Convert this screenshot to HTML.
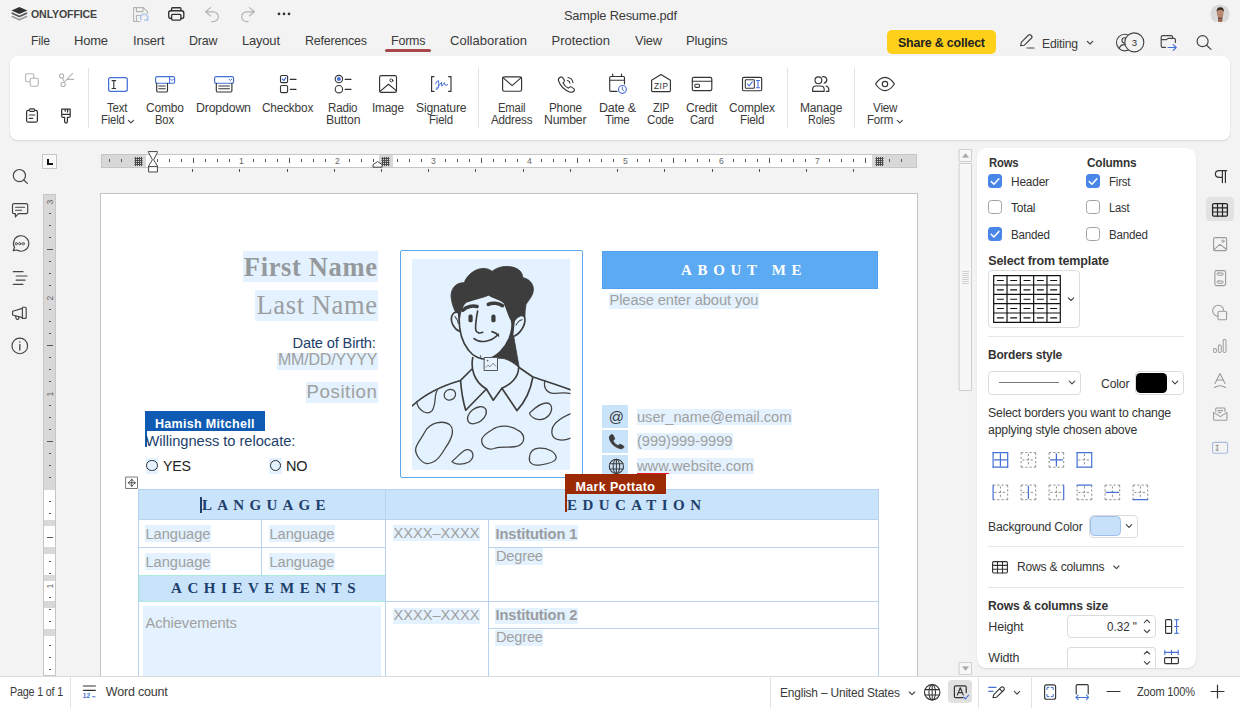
<!DOCTYPE html>
<html><head><meta charset="utf-8"><title>Sample Resume.pdf</title>
<style>
html,body{margin:0;padding:0}
body{width:1240px;height:708px;position:relative;overflow:hidden;background:#f3f3f3;font-family:"Liberation Sans",sans-serif}
.t{position:absolute;white-space:nowrap;line-height:20px;height:20px}
.b{position:absolute;box-sizing:border-box}
</style></head><body>
<span class="t" style="left:31.00px;top:3.93px;font-size:10.60px;color:#444;font-weight:700;letter-spacing:-0.126px;font-family:'Liberation Sans',sans-serif;">ONLYOFFICE</span>
<span class="t" style="left:564.00px;top:5.50px;font-size:13.00px;color:#3a3a3a;letter-spacing:-0.200px;transform:scaleX(0.9863);transform-origin:0 0;font-family:'Liberation Sans',sans-serif;">Sample Resume.pdf</span>
<span class="t" style="left:30.50px;top:30.50px;font-size:13.00px;color:#3a3a3a;letter-spacing:-0.200px;transform:scaleX(0.9338);transform-origin:0 0;font-family:'Liberation Sans',sans-serif;">File</span>
<span class="t" style="left:74.00px;top:30.50px;font-size:13.00px;color:#3a3a3a;letter-spacing:-0.200px;transform:scaleX(0.9978);transform-origin:0 0;font-family:'Liberation Sans',sans-serif;">Home</span>
<span class="t" style="left:132.50px;top:30.50px;font-size:13.00px;color:#3a3a3a;letter-spacing:-0.200px;transform:scaleX(0.9997);transform-origin:0 0;font-family:'Liberation Sans',sans-serif;">Insert</span>
<span class="t" style="left:189.00px;top:30.50px;font-size:13.00px;color:#3a3a3a;letter-spacing:-0.200px;transform:scaleX(0.9585);transform-origin:0 0;font-family:'Liberation Sans',sans-serif;">Draw</span>
<span class="t" style="left:242.00px;top:30.50px;font-size:13.00px;color:#3a3a3a;letter-spacing:-0.200px;transform:scaleX(0.9993);transform-origin:0 0;font-family:'Liberation Sans',sans-serif;">Layout</span>
<span class="t" style="left:304.50px;top:30.50px;font-size:13.00px;color:#3a3a3a;letter-spacing:-0.200px;transform:scaleX(0.9586);transform-origin:0 0;font-family:'Liberation Sans',sans-serif;">References</span>
<span class="t" style="left:391.00px;top:30.50px;font-size:13.00px;color:#3a3a3a;letter-spacing:-0.200px;transform:scaleX(0.9576);transform-origin:0 0;font-family:'Liberation Sans',sans-serif;">Forms</span>
<span class="t" style="left:450.00px;top:30.50px;font-size:13.00px;color:#3a3a3a;letter-spacing:0.033px;font-family:'Liberation Sans',sans-serif;">Collaboration</span>
<span class="t" style="left:551.50px;top:30.50px;font-size:13.00px;color:#3a3a3a;letter-spacing:-0.003px;font-family:'Liberation Sans',sans-serif;">Protection</span>
<span class="t" style="left:634.50px;top:30.50px;font-size:13.00px;color:#3a3a3a;letter-spacing:-0.200px;transform:scaleX(0.9875);transform-origin:0 0;font-family:'Liberation Sans',sans-serif;">View</span>
<span class="t" style="left:686.00px;top:30.50px;font-size:13.00px;color:#3a3a3a;letter-spacing:-0.189px;font-family:'Liberation Sans',sans-serif;">Plugins</span>
<div class="b" style="left:385.00px;top:49.00px;width:46.00px;height:3.00px;background:#a9484c;border-radius:1.5px"></div>
<div class="b" style="left:887.00px;top:30.00px;width:109.00px;height:23.50px;background:#ffd019;border-radius:5px"></div>
<span class="t" style="left:898.00px;top:32.50px;font-size:13.00px;color:#222;font-weight:700;letter-spacing:-0.200px;transform:scaleX(0.9548);transform-origin:0 0;font-family:'Liberation Sans',sans-serif;">Share &amp; collect</span>
<span class="t" style="left:1042.00px;top:33.50px;font-size:13.00px;color:#3a3a3a;letter-spacing:-0.200px;transform:scaleX(0.9339);transform-origin:0 0;font-family:'Liberation Sans',sans-serif;">Editing</span>
<div class="b" style="left:10.00px;top:56.00px;width:1220.00px;height:83.50px;background:#fff;border-radius:8px;box-shadow:0 1px 2px rgba(0,0,0,.12)"></div>
<div class="b" style="left:87.50px;top:68.00px;width:1.00px;height:59.50px;background:#e4e4e4"></div>
<div class="b" style="left:478.00px;top:68.00px;width:1.00px;height:59.50px;background:#e4e4e4"></div>
<div class="b" style="left:787.00px;top:68.00px;width:1.00px;height:59.50px;background:#e4e4e4"></div>
<div class="b" style="left:854.00px;top:68.00px;width:1.00px;height:59.50px;background:#e4e4e4"></div>
<span class="t" style="left:107.00px;top:98.17px;font-size:12.50px;color:#3a3a3a;letter-spacing:-0.200px;transform:scaleX(0.9183);transform-origin:0 0;font-family:'Liberation Sans',sans-serif;">Text</span>
<span class="t" style="left:100.50px;top:109.87px;font-size:12.50px;color:#3a3a3a;letter-spacing:-0.200px;transform:scaleX(0.9052);transform-origin:0 0;font-family:'Liberation Sans',sans-serif;">Field</span>
<span class="t" style="left:145.50px;top:98.17px;font-size:12.50px;color:#3a3a3a;letter-spacing:-0.200px;transform:scaleX(0.9622);transform-origin:0 0;font-family:'Liberation Sans',sans-serif;">Combo</span>
<span class="t" style="left:155.00px;top:109.87px;font-size:12.50px;color:#3a3a3a;letter-spacing:-0.200px;transform:scaleX(0.8988);transform-origin:0 0;font-family:'Liberation Sans',sans-serif;">Box</span>
<span class="t" style="left:195.50px;top:98.17px;font-size:12.50px;color:#3a3a3a;letter-spacing:-0.200px;transform:scaleX(0.9897);transform-origin:0 0;font-family:'Liberation Sans',sans-serif;">Dropdown</span>
<span class="t" style="left:262.40px;top:98.17px;font-size:12.50px;color:#3a3a3a;letter-spacing:-0.200px;transform:scaleX(0.9468);transform-origin:0 0;font-family:'Liberation Sans',sans-serif;">Checkbox</span>
<span class="t" style="left:328.00px;top:98.17px;font-size:12.50px;color:#3a3a3a;letter-spacing:-0.200px;transform:scaleX(0.9260);transform-origin:0 0;font-family:'Liberation Sans',sans-serif;">Radio</span>
<span class="t" style="left:325.50px;top:109.87px;font-size:12.50px;color:#3a3a3a;letter-spacing:-0.200px;transform:scaleX(0.9819);transform-origin:0 0;font-family:'Liberation Sans',sans-serif;">Button</span>
<span class="t" style="left:372.00px;top:98.17px;font-size:12.50px;color:#3a3a3a;letter-spacing:-0.200px;transform:scaleX(0.9429);transform-origin:0 0;font-family:'Liberation Sans',sans-serif;">Image</span>
<span class="t" style="left:415.50px;top:98.17px;font-size:12.50px;color:#3a3a3a;letter-spacing:-0.200px;transform:scaleX(0.9729);transform-origin:0 0;font-family:'Liberation Sans',sans-serif;">Signature</span>
<span class="t" style="left:428.50px;top:109.87px;font-size:12.50px;color:#3a3a3a;letter-spacing:-0.200px;transform:scaleX(0.9128);transform-origin:0 0;font-family:'Liberation Sans',sans-serif;">Field</span>
<span class="t" style="left:497.50px;top:98.17px;font-size:12.50px;color:#3a3a3a;letter-spacing:-0.200px;transform:scaleX(0.9029);transform-origin:0 0;font-family:'Liberation Sans',sans-serif;">Email</span>
<span class="t" style="left:490.50px;top:109.87px;font-size:12.50px;color:#3a3a3a;letter-spacing:-0.200px;transform:scaleX(0.9294);transform-origin:0 0;font-family:'Liberation Sans',sans-serif;">Address</span>
<span class="t" style="left:549.00px;top:98.17px;font-size:12.50px;color:#3a3a3a;letter-spacing:-0.200px;transform:scaleX(0.9337);transform-origin:0 0;font-family:'Liberation Sans',sans-serif;">Phone</span>
<span class="t" style="left:544.00px;top:109.87px;font-size:12.50px;color:#3a3a3a;letter-spacing:-0.200px;transform:scaleX(0.9780);transform-origin:0 0;font-family:'Liberation Sans',sans-serif;">Number</span>
<span class="t" style="left:598.60px;top:98.17px;font-size:12.50px;color:#3a3a3a;letter-spacing:-0.200px;transform:scaleX(0.9997);transform-origin:0 0;font-family:'Liberation Sans',sans-serif;">Date &amp;</span>
<span class="t" style="left:604.80px;top:109.87px;font-size:12.50px;color:#3a3a3a;letter-spacing:-0.200px;transform:scaleX(0.9284);transform-origin:0 0;font-family:'Liberation Sans',sans-serif;">Time</span>
<span class="t" style="left:652.50px;top:98.17px;font-size:12.50px;color:#3a3a3a;letter-spacing:-0.200px;transform:scaleX(0.8664);transform-origin:0 0;font-family:'Liberation Sans',sans-serif;">ZIP</span>
<span class="t" style="left:647.00px;top:109.87px;font-size:12.50px;color:#3a3a3a;letter-spacing:-0.200px;transform:scaleX(0.9221);transform-origin:0 0;font-family:'Liberation Sans',sans-serif;">Code</span>
<span class="t" style="left:686.00px;top:98.17px;font-size:12.50px;color:#3a3a3a;letter-spacing:-0.200px;transform:scaleX(0.9740);transform-origin:0 0;font-family:'Liberation Sans',sans-serif;">Credit</span>
<span class="t" style="left:689.50px;top:109.87px;font-size:12.50px;color:#3a3a3a;letter-spacing:-0.200px;transform:scaleX(0.9059);transform-origin:0 0;font-family:'Liberation Sans',sans-serif;">Card</span>
<span class="t" style="left:729.00px;top:98.17px;font-size:12.50px;color:#3a3a3a;letter-spacing:-0.200px;transform:scaleX(0.9559);transform-origin:0 0;font-family:'Liberation Sans',sans-serif;">Complex</span>
<span class="t" style="left:739.50px;top:109.87px;font-size:12.50px;color:#3a3a3a;letter-spacing:-0.200px;transform:scaleX(0.9318);transform-origin:0 0;font-family:'Liberation Sans',sans-serif;">Field</span>
<span class="t" style="left:799.50px;top:98.17px;font-size:12.50px;color:#3a3a3a;letter-spacing:-0.200px;transform:scaleX(0.9622);transform-origin:0 0;font-family:'Liberation Sans',sans-serif;">Manage</span>
<span class="t" style="left:807.50px;top:109.87px;font-size:12.50px;color:#3a3a3a;letter-spacing:-0.200px;transform:scaleX(0.8666);transform-origin:0 0;font-family:'Liberation Sans',sans-serif;">Roles</span>
<span class="t" style="left:872.50px;top:98.17px;font-size:12.50px;color:#3a3a3a;letter-spacing:-0.200px;transform:scaleX(0.9327);transform-origin:0 0;font-family:'Liberation Sans',sans-serif;">View</span>
<span class="t" style="left:867.00px;top:109.87px;font-size:12.50px;color:#3a3a3a;letter-spacing:-0.200px;transform:scaleX(0.9209);transform-origin:0 0;font-family:'Liberation Sans',sans-serif;">Form</span>
<div class="b" style="left:100.00px;top:193.00px;width:818.00px;height:484.00px;background:#fff;border:1px solid #c4c4c4"></div>
<div class="b" style="left:976.50px;top:148.00px;width:219.50px;height:520.00px;background:#fff;border-radius:9px;box-shadow:0 1px 2px rgba(0,0,0,.10)"></div>
<div class="b" style="left:243.00px;top:251.00px;width:135.00px;height:30.50px;background:#e3f2fe"></div>
<span class="t" style="left:243.80px;top:256.56px;font-size:26.50px;color:#96999c;font-weight:700;letter-spacing:0.656px;font-family:'Liberation Serif',serif;">First Name</span>
<div class="b" style="left:255.00px;top:290.00px;width:123.00px;height:30.50px;background:#e3f2fe"></div>
<span class="t" style="left:256.50px;top:294.56px;font-size:26.50px;color:#9b9ea1;letter-spacing:0.622px;font-family:'Liberation Serif',serif;">Last Name</span>
<span class="t" style="left:292.50px;top:332.92px;font-size:14.67px;color:#1d3f6b;letter-spacing:-0.162px;font-family:'Liberation Sans',sans-serif;">Date of Birth:</span>
<div class="b" style="left:277.00px;top:352.50px;width:101.00px;height:17.50px;background:#e3f2fe"></div>
<span class="t" style="left:277.50px;top:349.96px;font-size:16.00px;color:#a0a0a0;letter-spacing:-0.200px;transform:scaleX(0.9995);transform-origin:0 0;font-family:'Liberation Sans',sans-serif;">MM/DD/YYYY</span>
<div class="b" style="left:306.00px;top:382.00px;width:72.00px;height:20.50px;background:#e3f2fe"></div>
<span class="t" style="left:306.50px;top:382.03px;font-size:18.67px;color:#a0a0a0;letter-spacing:0.583px;font-family:'Liberation Sans',sans-serif;">Position</span>
<div class="b" style="left:145.00px;top:411.00px;width:120.00px;height:19.50px;background:#0f5bb3"></div>
<div class="b" style="left:145.00px;top:411.00px;width:1.60px;height:36.00px;background:#0f5bb3"></div>
<span class="t" style="left:155.00px;top:413.67px;font-size:12.50px;color:#fff;font-weight:700;letter-spacing:0.310px;font-family:'Liberation Sans',sans-serif;">Hamish Mitchell</span>
<span class="t" style="left:145.50px;top:430.92px;font-size:14.67px;color:#1d3f6b;letter-spacing:-0.036px;font-family:'Liberation Sans',sans-serif;">Willingness to relocate:</span>
<div class="b" style="left:146.00px;top:458.00px;width:12.00px;height:16.00px;background:#e3f2fe"></div>
<div class="b" style="left:146.00px;top:459.70px;width:11.60px;height:11.60px;border:1.5px solid #2e2e2e;border-radius:50%"></div>
<span class="t" style="left:162.50px;top:455.92px;font-size:14.67px;color:#222;letter-spacing:-0.200px;transform:scaleX(0.9670);transform-origin:0 0;font-family:'Liberation Sans',sans-serif;">YES</span>
<div class="b" style="left:269.00px;top:458.00px;width:13.00px;height:16.00px;background:#e3f2fe"></div>
<div class="b" style="left:269.70px;top:459.70px;width:11.60px;height:11.60px;border:1.5px solid #2e2e2e;border-radius:50%"></div>
<span class="t" style="left:285.50px;top:455.92px;font-size:14.67px;color:#222;letter-spacing:-0.200px;transform:scaleX(0.9860);transform-origin:0 0;font-family:'Liberation Sans',sans-serif;">NO</span>
<div class="b" style="left:399.50px;top:250.00px;width:183.50px;height:227.50px;border:1px solid #5fa8ec;border-radius:2px;background:#fff"></div>
<div class="b" style="left:412.00px;top:259.00px;width:158.20px;height:211.30px;background:#e3f2fe"></div>
<div class="b" style="left:602.00px;top:251.00px;width:276.00px;height:37.50px;background:#5caaf2;border:1px solid #4fa1ef"></div>
<span class="t" style="left:681.00px;top:259.94px;font-size:15.00px;color:#fff;font-weight:700;letter-spacing:5.645px;font-family:'Liberation Serif',serif;white-space:pre;">ABOUT ME</span>
<div class="b" style="left:609.00px;top:293.00px;width:150.00px;height:16.00px;background:#e3f2fe"></div>
<span class="t" style="left:609.50px;top:290.42px;font-size:14.67px;color:#a0a0a0;letter-spacing:-0.089px;font-family:'Liberation Sans',sans-serif;">Please enter about you</span>
<div class="b" style="left:602.00px;top:405.00px;width:26.00px;height:22.50px;background:#c9e3fb"></div>
<div class="b" style="left:602.00px;top:430.00px;width:26.00px;height:22.50px;background:#c9e3fb"></div>
<div class="b" style="left:602.00px;top:455.00px;width:26.00px;height:22.00px;background:#c9e3fb"></div>
<div class="b" style="left:636.50px;top:409.00px;width:155.50px;height:16.00px;background:#e3f2fe"></div>
<span class="t" style="left:637.00px;top:406.92px;font-size:14.67px;color:#a0a0a0;letter-spacing:-0.035px;font-family:'Liberation Sans',sans-serif;">user_name@email.com</span>
<div class="b" style="left:636.50px;top:433.00px;width:96.50px;height:16.50px;background:#e3f2fe"></div>
<span class="t" style="left:637.00px;top:430.92px;font-size:14.67px;color:#a0a0a0;letter-spacing:-0.061px;font-family:'Liberation Sans',sans-serif;">(999)999-9999</span>
<div class="b" style="left:636.50px;top:458.00px;width:117.50px;height:16.00px;background:#e3f2fe"></div>
<span class="t" style="left:637.00px;top:455.92px;font-size:14.67px;color:#a0a0a0;letter-spacing:-0.005px;font-family:'Liberation Sans',sans-serif;">www.website.com</span>
<div class="b" style="left:636.50px;top:473.00px;width:32.50px;height:1.30px;background:#e0141c"></div>
<div class="b" style="left:138.50px;top:489.00px;width:740.50px;height:30.50px;background:#c9e3fb"></div>
<div class="b" style="left:138.50px;top:574.50px;width:247.00px;height:27.00px;background:#c9e3fb;border:1px solid #a8ecd9;border-right:none"></div>
<div class="b" style="left:138.00px;top:489.00px;width:1.00px;height:187.00px;background:#b9d2f0"></div>
<div class="b" style="left:385.00px;top:489.00px;width:1.00px;height:187.00px;background:#b9d2f0"></div>
<div class="b" style="left:878.00px;top:489.00px;width:1.00px;height:187.00px;background:#b9d2f0"></div>
<div class="b" style="left:261.00px;top:519.50px;width:1.00px;height:55.00px;background:#b9d2f0"></div>
<div class="b" style="left:488.00px;top:519.50px;width:1.00px;height:156.50px;background:#b9d2f0"></div>
<div class="b" style="left:138.50px;top:519.00px;width:740.50px;height:1.00px;background:#b9d2f0"></div>
<div class="b" style="left:138.50px;top:547.00px;width:247.00px;height:1.00px;background:#b9d2f0"></div>
<div class="b" style="left:488.50px;top:546.50px;width:390.50px;height:1.00px;background:#b9d2f0"></div>
<div class="b" style="left:385.50px;top:601.00px;width:493.50px;height:1.00px;background:#b9d2f0"></div>
<div class="b" style="left:488.50px;top:628.00px;width:390.50px;height:1.00px;background:#b9d2f0"></div>
<div class="b" style="left:138.50px;top:488.50px;width:740.50px;height:1.00px;background:#b9d2f0"></div>
<span class="t" style="left:202.00px;top:494.94px;font-size:15.00px;color:#1d3f6b;font-weight:700;letter-spacing:5.260px;font-family:'Liberation Serif',serif;">LANGUAGE</span>
<div class="b" style="left:200.00px;top:496.50px;width:1.60px;height:16.50px;background:#1d3f6b"></div>
<span class="t" style="left:567.00px;top:494.94px;font-size:15.00px;color:#1d3f6b;font-weight:700;letter-spacing:5.429px;font-family:'Liberation Serif',serif;">EDUCATION</span>
<span class="t" style="left:171.00px;top:577.94px;font-size:15.00px;color:#1d3f6b;font-weight:700;letter-spacing:5.558px;font-family:'Liberation Serif',serif;">ACHIEVEMENTS</span>
<div class="b" style="left:145.00px;top:525.00px;width:66.00px;height:16.50px;background:#e3f2fe"></div>
<span class="t" style="left:145.50px;top:523.92px;font-size:14.67px;color:#a0a0a0;letter-spacing:-0.038px;font-family:'Liberation Sans',sans-serif;">Language</span>
<div class="b" style="left:269.00px;top:525.00px;width:66.00px;height:16.50px;background:#e3f2fe"></div>
<span class="t" style="left:269.50px;top:523.92px;font-size:14.67px;color:#a0a0a0;letter-spacing:-0.038px;font-family:'Liberation Sans',sans-serif;">Language</span>
<div class="b" style="left:145.00px;top:553.00px;width:66.00px;height:16.50px;background:#e3f2fe"></div>
<span class="t" style="left:145.50px;top:551.92px;font-size:14.67px;color:#a0a0a0;letter-spacing:-0.038px;font-family:'Liberation Sans',sans-serif;">Language</span>
<div class="b" style="left:269.00px;top:553.00px;width:66.00px;height:16.50px;background:#e3f2fe"></div>
<span class="t" style="left:269.50px;top:551.92px;font-size:14.67px;color:#a0a0a0;letter-spacing:-0.038px;font-family:'Liberation Sans',sans-serif;">Language</span>
<div class="b" style="left:142.50px;top:606.00px;width:238.50px;height:70.00px;background:#e3f2fe"></div>
<span class="t" style="left:145.50px;top:612.92px;font-size:14.67px;color:#a0a0a0;letter-spacing:-0.058px;font-family:'Liberation Sans',sans-serif;">Achievements</span>
<div class="b" style="left:393.00px;top:525.00px;width:87.00px;height:16.00px;background:#e3f2fe"></div>
<span class="t" style="left:393.50px;top:523.42px;font-size:14.67px;color:#a0a0a0;letter-spacing:-0.055px;font-family:'Liberation Sans',sans-serif;">XXXX–XXXX</span>
<div class="b" style="left:393.00px;top:607.50px;width:87.00px;height:16.00px;background:#e3f2fe"></div>
<span class="t" style="left:393.50px;top:604.92px;font-size:14.67px;color:#a0a0a0;letter-spacing:-0.055px;font-family:'Liberation Sans',sans-serif;">XXXX–XXXX</span>
<div class="b" style="left:495.00px;top:525.00px;width:83.00px;height:16.00px;background:#e3f2fe"></div>
<span class="t" style="left:495.50px;top:523.92px;font-size:14.67px;color:#9a9c9e;font-weight:700;letter-spacing:-0.093px;font-family:'Liberation Sans',sans-serif;">Institution 1</span>
<div class="b" style="left:495.00px;top:607.50px;width:83.00px;height:16.50px;background:#e3f2fe"></div>
<span class="t" style="left:495.50px;top:605.42px;font-size:14.67px;color:#9a9c9e;font-weight:700;letter-spacing:-0.093px;font-family:'Liberation Sans',sans-serif;">Institution 2</span>
<div class="b" style="left:495.00px;top:548.00px;width:48.00px;height:16.50px;background:#e3f2fe"></div>
<span class="t" style="left:495.50px;top:546.42px;font-size:14.67px;color:#a0a0a0;letter-spacing:-0.200px;transform:scaleX(0.9976);transform-origin:0 0;font-family:'Liberation Sans',sans-serif;">Degree</span>
<div class="b" style="left:495.00px;top:629.50px;width:48.00px;height:16.00px;background:#e3f2fe"></div>
<span class="t" style="left:495.50px;top:627.42px;font-size:14.67px;color:#a0a0a0;letter-spacing:-0.200px;transform:scaleX(0.9976);transform-origin:0 0;font-family:'Liberation Sans',sans-serif;">Degree</span>
<div class="b" style="left:565.00px;top:474.00px;width:101.00px;height:20.00px;background:#9b2a03"></div>
<div class="b" style="left:565.00px;top:474.00px;width:1.60px;height:38.00px;background:#9b2a03"></div>
<span class="t" style="left:575.50px;top:476.67px;font-size:12.50px;color:#fff;font-weight:700;letter-spacing:0.346px;font-family:'Liberation Sans',sans-serif;">Mark Pottato</span>
<div class="b" style="left:42.00px;top:154.00px;width:15.00px;height:15.00px;background:#f9f9f9;border:1px solid #c6c6c6"></div>
<div class="b" style="left:47.00px;top:158.50px;width:2.00px;height:6.50px;background:#111"></div>
<div class="b" style="left:47.00px;top:163.00px;width:6.00px;height:2.00px;background:#111"></div>
<div class="b" style="left:101.00px;top:154.00px;width:816.00px;height:14.00px;background:#fff;border:1px solid #c6c6c6"></div>
<div class="b" style="left:102.00px;top:155.00px;width:44.00px;height:12.00px;background:#d8d8d8"></div>
<div class="b" style="left:379.00px;top:155.00px;width:13.50px;height:12.00px;background:#d8d8d8"></div>
<div class="b" style="left:871.50px;top:155.00px;width:44.50px;height:12.00px;background:#d8d8d8"></div>
<div class="b" style="left:109.00px;top:159.00px;width:1.00px;height:3.00px;background:#555"></div>
<div class="b" style="left:121.00px;top:159.00px;width:1.00px;height:3.00px;background:#555"></div>
<div class="b" style="left:157.00px;top:159.00px;width:1.00px;height:3.00px;background:#555"></div>
<div class="b" style="left:169.00px;top:159.00px;width:1.00px;height:3.00px;background:#555"></div>
<div class="b" style="left:181.00px;top:159.00px;width:1.00px;height:3.00px;background:#555"></div>
<div class="b" style="left:193.00px;top:157.50px;width:1.00px;height:5.70px;background:#555"></div>
<div class="b" style="left:205.00px;top:159.00px;width:1.00px;height:3.00px;background:#555"></div>
<div class="b" style="left:217.00px;top:159.00px;width:1.00px;height:3.00px;background:#555"></div>
<div class="b" style="left:229.00px;top:159.00px;width:1.00px;height:3.00px;background:#555"></div>
<span class="t" style="left:239.10px;top:150.92px;font-size:8.60px;color:#666;font-family:'Liberation Sans',sans-serif;">1</span>
<div class="b" style="left:253.00px;top:159.00px;width:1.00px;height:3.00px;background:#555"></div>
<div class="b" style="left:265.00px;top:159.00px;width:1.00px;height:3.00px;background:#555"></div>
<div class="b" style="left:277.00px;top:159.00px;width:1.00px;height:3.00px;background:#555"></div>
<div class="b" style="left:289.00px;top:157.50px;width:1.00px;height:5.70px;background:#555"></div>
<div class="b" style="left:301.00px;top:159.00px;width:1.00px;height:3.00px;background:#555"></div>
<div class="b" style="left:313.00px;top:159.00px;width:1.00px;height:3.00px;background:#555"></div>
<div class="b" style="left:325.00px;top:159.00px;width:1.00px;height:3.00px;background:#555"></div>
<span class="t" style="left:335.10px;top:150.92px;font-size:8.60px;color:#666;font-family:'Liberation Sans',sans-serif;">2</span>
<div class="b" style="left:349.00px;top:159.00px;width:1.00px;height:3.00px;background:#555"></div>
<div class="b" style="left:361.00px;top:159.00px;width:1.00px;height:3.00px;background:#555"></div>
<div class="b" style="left:373.00px;top:159.00px;width:1.00px;height:3.00px;background:#555"></div>
<div class="b" style="left:397.00px;top:159.00px;width:1.00px;height:3.00px;background:#555"></div>
<div class="b" style="left:409.00px;top:159.00px;width:1.00px;height:3.00px;background:#555"></div>
<div class="b" style="left:421.00px;top:159.00px;width:1.00px;height:3.00px;background:#555"></div>
<span class="t" style="left:431.10px;top:150.92px;font-size:8.60px;color:#666;font-family:'Liberation Sans',sans-serif;">3</span>
<div class="b" style="left:445.00px;top:159.00px;width:1.00px;height:3.00px;background:#555"></div>
<div class="b" style="left:457.00px;top:159.00px;width:1.00px;height:3.00px;background:#555"></div>
<div class="b" style="left:469.00px;top:159.00px;width:1.00px;height:3.00px;background:#555"></div>
<div class="b" style="left:481.00px;top:157.50px;width:1.00px;height:5.70px;background:#555"></div>
<div class="b" style="left:493.00px;top:159.00px;width:1.00px;height:3.00px;background:#555"></div>
<div class="b" style="left:505.00px;top:159.00px;width:1.00px;height:3.00px;background:#555"></div>
<div class="b" style="left:517.00px;top:159.00px;width:1.00px;height:3.00px;background:#555"></div>
<span class="t" style="left:527.10px;top:150.92px;font-size:8.60px;color:#666;font-family:'Liberation Sans',sans-serif;">4</span>
<div class="b" style="left:541.00px;top:159.00px;width:1.00px;height:3.00px;background:#555"></div>
<div class="b" style="left:553.00px;top:159.00px;width:1.00px;height:3.00px;background:#555"></div>
<div class="b" style="left:565.00px;top:159.00px;width:1.00px;height:3.00px;background:#555"></div>
<div class="b" style="left:577.00px;top:157.50px;width:1.00px;height:5.70px;background:#555"></div>
<div class="b" style="left:589.00px;top:159.00px;width:1.00px;height:3.00px;background:#555"></div>
<div class="b" style="left:601.00px;top:159.00px;width:1.00px;height:3.00px;background:#555"></div>
<div class="b" style="left:613.00px;top:159.00px;width:1.00px;height:3.00px;background:#555"></div>
<span class="t" style="left:623.10px;top:150.92px;font-size:8.60px;color:#666;font-family:'Liberation Sans',sans-serif;">5</span>
<div class="b" style="left:637.00px;top:159.00px;width:1.00px;height:3.00px;background:#555"></div>
<div class="b" style="left:649.00px;top:159.00px;width:1.00px;height:3.00px;background:#555"></div>
<div class="b" style="left:661.00px;top:159.00px;width:1.00px;height:3.00px;background:#555"></div>
<div class="b" style="left:673.00px;top:157.50px;width:1.00px;height:5.70px;background:#555"></div>
<div class="b" style="left:685.00px;top:159.00px;width:1.00px;height:3.00px;background:#555"></div>
<div class="b" style="left:697.00px;top:159.00px;width:1.00px;height:3.00px;background:#555"></div>
<div class="b" style="left:709.00px;top:159.00px;width:1.00px;height:3.00px;background:#555"></div>
<span class="t" style="left:719.10px;top:150.92px;font-size:8.60px;color:#666;font-family:'Liberation Sans',sans-serif;">6</span>
<div class="b" style="left:733.00px;top:159.00px;width:1.00px;height:3.00px;background:#555"></div>
<div class="b" style="left:745.00px;top:159.00px;width:1.00px;height:3.00px;background:#555"></div>
<div class="b" style="left:757.00px;top:159.00px;width:1.00px;height:3.00px;background:#555"></div>
<div class="b" style="left:769.00px;top:157.50px;width:1.00px;height:5.70px;background:#555"></div>
<div class="b" style="left:781.00px;top:159.00px;width:1.00px;height:3.00px;background:#555"></div>
<div class="b" style="left:793.00px;top:159.00px;width:1.00px;height:3.00px;background:#555"></div>
<div class="b" style="left:805.00px;top:159.00px;width:1.00px;height:3.00px;background:#555"></div>
<span class="t" style="left:815.10px;top:150.92px;font-size:8.60px;color:#666;font-family:'Liberation Sans',sans-serif;">7</span>
<div class="b" style="left:829.00px;top:159.00px;width:1.00px;height:3.00px;background:#555"></div>
<div class="b" style="left:841.00px;top:159.00px;width:1.00px;height:3.00px;background:#555"></div>
<div class="b" style="left:853.00px;top:159.00px;width:1.00px;height:3.00px;background:#555"></div>
<div class="b" style="left:865.00px;top:157.50px;width:1.00px;height:5.70px;background:#555"></div>
<div class="b" style="left:889.00px;top:159.00px;width:1.00px;height:3.00px;background:#555"></div>
<div class="b" style="left:901.00px;top:159.00px;width:1.00px;height:3.00px;background:#555"></div>
<div class="b" style="left:192.04px;top:169.00px;width:1.00px;height:3.00px;background:#555"></div>
<div class="b" style="left:239.28px;top:169.00px;width:1.00px;height:3.00px;background:#555"></div>
<div class="b" style="left:286.52px;top:169.00px;width:1.00px;height:3.00px;background:#555"></div>
<div class="b" style="left:333.76px;top:169.00px;width:1.00px;height:3.00px;background:#555"></div>
<div class="b" style="left:381.00px;top:169.00px;width:1.00px;height:3.00px;background:#555"></div>
<div class="b" style="left:428.24px;top:169.00px;width:1.00px;height:3.00px;background:#555"></div>
<div class="b" style="left:475.48px;top:169.00px;width:1.00px;height:3.00px;background:#555"></div>
<div class="b" style="left:522.72px;top:169.00px;width:1.00px;height:3.00px;background:#555"></div>
<div class="b" style="left:569.96px;top:169.00px;width:1.00px;height:3.00px;background:#555"></div>
<div class="b" style="left:617.20px;top:169.00px;width:1.00px;height:3.00px;background:#555"></div>
<div class="b" style="left:664.44px;top:169.00px;width:1.00px;height:3.00px;background:#555"></div>
<div class="b" style="left:711.68px;top:169.00px;width:1.00px;height:3.00px;background:#555"></div>
<div class="b" style="left:758.92px;top:169.00px;width:1.00px;height:3.00px;background:#555"></div>
<div class="b" style="left:806.16px;top:169.00px;width:1.00px;height:3.00px;background:#555"></div>
<div class="b" style="left:853.40px;top:169.00px;width:1.00px;height:3.00px;background:#555"></div>
<div class="b" style="left:43.00px;top:194.00px;width:13.00px;height:482.00px;background:#fff;border:1px solid #c6c6c6"></div>
<div class="b" style="left:44.00px;top:195.00px;width:11.00px;height:294.50px;background:#d8d8d8"></div>
<div class="b" style="left:44.00px;top:519.70px;width:11.00px;height:6.70px;background:#d8d8d8"></div>
<div class="b" style="left:44.00px;top:547.00px;width:11.00px;height:6.50px;background:#d8d8d8"></div>
<div class="b" style="left:44.00px;top:574.60px;width:11.00px;height:6.80px;background:#d8d8d8"></div>
<div class="b" style="left:44.00px;top:601.40px;width:11.00px;height:7.10px;background:#d8d8d8"></div>
<div class="b" style="left:44.00px;top:628.50px;width:11.00px;height:7.10px;background:#d8d8d8"></div>
<span class="t" style="left:39.50px;top:191.50px;font-size:8.6px;color:#666;width:20px;text-align:center;transform:rotate(-90deg);transform-origin:50% 50%">3</span>
<div class="b" style="left:48.50px;top:213.00px;width:2.00px;height:1.00px;background:#555"></div>
<div class="b" style="left:48.50px;top:225.00px;width:2.00px;height:1.00px;background:#555"></div>
<div class="b" style="left:48.50px;top:237.00px;width:2.00px;height:1.00px;background:#555"></div>
<div class="b" style="left:46.50px;top:249.00px;width:6.00px;height:1.00px;background:#555"></div>
<div class="b" style="left:48.50px;top:261.00px;width:2.00px;height:1.00px;background:#555"></div>
<div class="b" style="left:48.50px;top:273.00px;width:2.00px;height:1.00px;background:#555"></div>
<div class="b" style="left:48.50px;top:285.00px;width:2.00px;height:1.00px;background:#555"></div>
<span class="t" style="left:39.50px;top:287.50px;font-size:8.6px;color:#666;width:20px;text-align:center;transform:rotate(-90deg);transform-origin:50% 50%">2</span>
<div class="b" style="left:48.50px;top:309.00px;width:2.00px;height:1.00px;background:#555"></div>
<div class="b" style="left:48.50px;top:321.00px;width:2.00px;height:1.00px;background:#555"></div>
<div class="b" style="left:48.50px;top:333.00px;width:2.00px;height:1.00px;background:#555"></div>
<div class="b" style="left:46.50px;top:345.00px;width:6.00px;height:1.00px;background:#555"></div>
<div class="b" style="left:48.50px;top:357.00px;width:2.00px;height:1.00px;background:#555"></div>
<div class="b" style="left:48.50px;top:369.00px;width:2.00px;height:1.00px;background:#555"></div>
<div class="b" style="left:48.50px;top:381.00px;width:2.00px;height:1.00px;background:#555"></div>
<span class="t" style="left:39.50px;top:383.50px;font-size:8.6px;color:#666;width:20px;text-align:center;transform:rotate(-90deg);transform-origin:50% 50%">1</span>
<div class="b" style="left:48.50px;top:405.00px;width:2.00px;height:1.00px;background:#555"></div>
<div class="b" style="left:48.50px;top:417.00px;width:2.00px;height:1.00px;background:#555"></div>
<div class="b" style="left:48.50px;top:429.00px;width:2.00px;height:1.00px;background:#555"></div>
<div class="b" style="left:46.50px;top:441.00px;width:6.00px;height:1.00px;background:#555"></div>
<div class="b" style="left:48.50px;top:453.00px;width:2.00px;height:1.00px;background:#555"></div>
<div class="b" style="left:48.50px;top:465.00px;width:2.00px;height:1.00px;background:#555"></div>
<div class="b" style="left:48.50px;top:477.00px;width:2.00px;height:1.00px;background:#555"></div>
<div class="b" style="left:48.50px;top:501.00px;width:2.00px;height:1.00px;background:#555"></div>
<div class="b" style="left:48.50px;top:513.00px;width:2.00px;height:1.00px;background:#555"></div>
<div class="b" style="left:46.50px;top:537.00px;width:6.00px;height:1.00px;background:#555"></div>
<div class="b" style="left:48.50px;top:561.00px;width:2.00px;height:1.00px;background:#555"></div>
<div class="b" style="left:48.50px;top:573.00px;width:2.00px;height:1.00px;background:#555"></div>
<span class="t" style="left:39.50px;top:575.50px;font-size:8.6px;color:#666;width:20px;text-align:center;transform:rotate(-90deg);transform-origin:50% 50%">1</span>
<div class="b" style="left:48.50px;top:597.00px;width:2.00px;height:1.00px;background:#555"></div>
<div class="b" style="left:48.50px;top:609.00px;width:2.00px;height:1.00px;background:#555"></div>
<div class="b" style="left:48.50px;top:621.00px;width:2.00px;height:1.00px;background:#555"></div>
<div class="b" style="left:48.50px;top:645.00px;width:2.00px;height:1.00px;background:#555"></div>
<div class="b" style="left:48.50px;top:657.00px;width:2.00px;height:1.00px;background:#555"></div>
<div class="b" style="left:48.50px;top:669.00px;width:2.00px;height:1.00px;background:#555"></div>
<div class="b" style="left:0.00px;top:676.00px;width:1240.00px;height:32.00px;background:#fff;border-top:1px solid #dcdcdc"></div>
<span class="t" style="left:10.30px;top:681.67px;font-size:12.50px;color:#3a3a3a;letter-spacing:-0.200px;transform:scaleX(0.8590);transform-origin:0 0;font-family:'Liberation Sans',sans-serif;">Page 1 of 1</span>
<span class="t" style="left:105.80px;top:681.67px;font-size:12.50px;color:#3a3a3a;letter-spacing:-0.198px;font-family:'Liberation Sans',sans-serif;">Word count</span>
<span class="t" style="left:779.90px;top:682.67px;font-size:12.50px;color:#3a3a3a;letter-spacing:-0.200px;transform:scaleX(0.9551);transform-origin:0 0;font-family:'Liberation Sans',sans-serif;">English – United States</span>
<span class="t" style="left:1136.50px;top:681.67px;font-size:12.50px;color:#3a3a3a;letter-spacing:-0.200px;transform:scaleX(0.8816);transform-origin:0 0;font-family:'Liberation Sans',sans-serif;">Zoom 100%</span>
<div class="b" style="left:70.10px;top:676.00px;width:1.00px;height:32.00px;background:#e2e2e2"></div>
<div class="b" style="left:769.50px;top:676.00px;width:1.00px;height:32.00px;background:#e2e2e2"></div>
<div class="b" style="left:978.00px;top:676.00px;width:1.00px;height:32.00px;background:#e2e2e2"></div>
<div class="b" style="left:1031.00px;top:676.00px;width:1.00px;height:32.00px;background:#e2e2e2"></div>
<div class="b" style="left:948.00px;top:680.00px;width:23.50px;height:23.00px;background:#e1e1e1;border-radius:4px"></div>
<span class="t" style="left:988.50px;top:152.67px;font-size:12.50px;color:#333;font-weight:700;letter-spacing:-0.200px;transform:scaleX(0.9012);transform-origin:0 0;font-family:'Liberation Sans',sans-serif;">Rows</span>
<span class="t" style="left:1086.50px;top:152.67px;font-size:12.50px;color:#333;font-weight:700;letter-spacing:-0.200px;transform:scaleX(0.9470);transform-origin:0 0;font-family:'Liberation Sans',sans-serif;">Columns</span>
<span class="t" style="left:1010.50px;top:171.67px;font-size:12.50px;color:#333;letter-spacing:-0.200px;transform:scaleX(0.9501);transform-origin:0 0;font-family:'Liberation Sans',sans-serif;">Header</span>
<span class="t" style="left:1010.50px;top:198.17px;font-size:12.50px;color:#333;letter-spacing:-0.200px;transform:scaleX(0.9569);transform-origin:0 0;font-family:'Liberation Sans',sans-serif;">Total</span>
<span class="t" style="left:1010.50px;top:224.67px;font-size:12.50px;color:#333;letter-spacing:-0.200px;transform:scaleX(0.9265);transform-origin:0 0;font-family:'Liberation Sans',sans-serif;">Banded</span>
<span class="t" style="left:1108.50px;top:171.67px;font-size:12.50px;color:#333;letter-spacing:-0.200px;transform:scaleX(0.9150);transform-origin:0 0;font-family:'Liberation Sans',sans-serif;">First</span>
<span class="t" style="left:1108.50px;top:198.17px;font-size:12.50px;color:#333;letter-spacing:-0.200px;transform:scaleX(0.8903);transform-origin:0 0;font-family:'Liberation Sans',sans-serif;">Last</span>
<span class="t" style="left:1108.50px;top:224.67px;font-size:12.50px;color:#333;letter-spacing:-0.200px;transform:scaleX(0.9265);transform-origin:0 0;font-family:'Liberation Sans',sans-serif;">Banded</span>
<span class="t" style="left:988.30px;top:250.67px;font-size:12.50px;color:#333;font-weight:700;letter-spacing:-0.118px;font-family:'Liberation Sans',sans-serif;">Select from template</span>
<span class="t" style="left:988.30px;top:345.17px;font-size:12.50px;color:#333;font-weight:700;letter-spacing:-0.200px;transform:scaleX(0.9575);transform-origin:0 0;font-family:'Liberation Sans',sans-serif;">Borders style</span>
<span class="t" style="left:1100.50px;top:373.67px;font-size:12.50px;color:#333;letter-spacing:-0.200px;transform:scaleX(0.9804);transform-origin:0 0;font-family:'Liberation Sans',sans-serif;">Color</span>
<span class="t" style="left:988.30px;top:402.67px;font-size:12.50px;color:#333;letter-spacing:-0.200px;transform:scaleX(0.9846);transform-origin:0 0;font-family:'Liberation Sans',sans-serif;">Select borders you want to change</span>
<span class="t" style="left:988.30px;top:420.17px;font-size:12.50px;color:#333;letter-spacing:-0.200px;transform:scaleX(0.9826);transform-origin:0 0;font-family:'Liberation Sans',sans-serif;">applying style chosen above</span>
<span class="t" style="left:988.30px;top:516.67px;font-size:12.50px;color:#333;letter-spacing:-0.200px;transform:scaleX(0.9758);transform-origin:0 0;font-family:'Liberation Sans',sans-serif;">Background Color</span>
<span class="t" style="left:1016.50px;top:556.67px;font-size:12.50px;color:#333;letter-spacing:-0.200px;transform:scaleX(0.9670);transform-origin:0 0;font-family:'Liberation Sans',sans-serif;">Rows &amp; columns</span>
<span class="t" style="left:988.30px;top:595.67px;font-size:12.50px;color:#333;font-weight:700;letter-spacing:-0.200px;transform:scaleX(0.9678);transform-origin:0 0;font-family:'Liberation Sans',sans-serif;">Rows &amp; columns size</span>
<span class="t" style="left:988.30px;top:616.67px;font-size:12.50px;color:#333;letter-spacing:-0.186px;font-family:'Liberation Sans',sans-serif;">Height</span>
<span class="t" style="left:988.30px;top:648.17px;font-size:12.50px;color:#333;letter-spacing:-0.188px;font-family:'Liberation Sans',sans-serif;">Width</span>
<div class="b" style="left:988.00px;top:174.30px;width:14.00px;height:14.00px;background:#4a86e8;border-radius:3.5px"></div>
<div class="b" style="left:988.00px;top:200.30px;width:14.00px;height:14.00px;background:#fff;border:1px solid #a2a2a2;border-radius:3.5px"></div>
<div class="b" style="left:988.00px;top:227.00px;width:14.00px;height:14.00px;background:#4a86e8;border-radius:3.5px"></div>
<div class="b" style="left:1086.00px;top:174.30px;width:14.00px;height:14.00px;background:#4a86e8;border-radius:3.5px"></div>
<div class="b" style="left:1086.00px;top:200.30px;width:14.00px;height:14.00px;background:#fff;border:1px solid #a2a2a2;border-radius:3.5px"></div>
<div class="b" style="left:1086.00px;top:227.00px;width:14.00px;height:14.00px;background:#fff;border:1px solid #a2a2a2;border-radius:3.5px"></div>
<div class="b" style="left:988.00px;top:270.00px;width:91.50px;height:57.50px;border:1px solid #dedede;border-radius:4px;background:#fff"></div>
<div class="b" style="left:988.00px;top:335.50px;width:196.00px;height:1.00px;background:#e6e6e6"></div>
<div class="b" style="left:988.00px;top:546.00px;width:196.00px;height:1.00px;background:#e6e6e6"></div>
<div class="b" style="left:988.00px;top:586.50px;width:196.00px;height:1.00px;background:#e6e6e6"></div>
<div class="b" style="left:988.00px;top:371.00px;width:92.50px;height:23.50px;border:1px solid #dcdcdc;border-radius:4px;background:#fff"></div>
<div class="b" style="left:999.00px;top:382.00px;width:60.00px;height:1.00px;background:#777"></div>
<div class="b" style="left:1134.50px;top:371.00px;width:49.00px;height:23.50px;border:1px solid #dcdcdc;border-radius:4px;background:#fff"></div>
<div class="b" style="left:1136.00px;top:373.00px;width:31.00px;height:19.50px;background:#000;border-radius:4.5px"></div>
<div class="b" style="left:1088.50px;top:514.50px;width:49.00px;height:23.00px;border:1px solid #dcdcdc;border-radius:4px;background:#fff"></div>
<div class="b" style="left:1090.00px;top:516.00px;width:31.00px;height:20.00px;background:#c8e1fb;border:1px solid #9fc0ea;border-radius:4.5px"></div>
<div class="b" style="left:1066.50px;top:614.50px;width:89.00px;height:23.00px;border:1px solid #dcdcdc;border-radius:4px;background:#fff"></div>
<div class="b" style="left:1066.50px;top:646.50px;width:89.00px;height:21.50px;border:1px solid #dcdcdc;border-bottom:none;border-radius:4px 4px 0 0;background:#fff"></div>
<span class="t" style="left:653.90px;top:75.72px;font-size:8.30px;color:#333;letter-spacing:0.594px;font-family:'Liberation Sans',sans-serif;">ZIP</span>
<svg class="b" style="left:0;top:0" width="1240" height="708" viewBox="0 0 1240 708" fill="none" stroke-linecap="round" stroke-linejoin="round"><path d="M19.4 6.9 L27.3 10.4 L19.4 13.9 L11.5 10.4 Z" stroke="none" stroke-width="0" fill="#333" />
<path d="M12.3 13.2 L19.4 16.4 L26.5 13.2" stroke="#555" stroke-width="1.7" fill="none" />
<path d="M12.3 16.6 L19.4 19.8 L26.5 16.6" stroke="#999" stroke-width="1.7" fill="none" />
<path d="M140 21.5 H133.6 V7.6 H143.4 L147.4 11.6 V13.5 M136.5 7.6 V11.6 H143 V7.6 M136.5 21.5 V15.5 H141" stroke="#b4b4b4" stroke-width="1.1" fill="none" />
<path d="M141.2 19.8 A3.6 3.6 0 1 1 147.3 19.6 M147.8 16.8 V20.2 H144.6" stroke="#a9c1f0" stroke-width="1.2" fill="none" />
<rect x="168.70" y="10.70" width="15.10" height="7.80" rx="2.2" stroke="#333" stroke-width="1.35" fill="none"/>
<path d="M171.6 10.7 V8.6 Q171.6 7.7 172.5 7.7 H180 Q180.9 7.7 180.9 8.6 V10.7" stroke="#333" stroke-width="1.35" fill="none" />
<rect x="171.60" y="14.40" width="9.30" height="5.70" rx="1" stroke="#333" stroke-width="1.35" fill="#f3f3f3"/>
<path d="M210.6 7.6 L205.6 11.8 L210.6 16 M205.8 11.8 H213.4 A4.9 4.9 0 0 1 213.4 21.6 H211.8" stroke="#b4b4b4" stroke-width="1.15" fill="none" />
<path d="M249.4 7.6 L254.4 11.8 L249.4 16 M254.2 11.8 H246.6 A4.9 4.9 0 0 0 246.6 21.6 H248.2" stroke="#b4b4b4" stroke-width="1.15" fill="none" />
<circle cx="279.00" cy="13.90" r="1.35" stroke="none" stroke-width="0" fill="#333"/>
<circle cx="284.00" cy="13.90" r="1.35" stroke="none" stroke-width="0" fill="#333"/>
<circle cx="289.00" cy="13.90" r="1.35" stroke="none" stroke-width="0" fill="#333"/>
<path d="M1020.6 45.6 L1021.4 42.2 L1028.6 35 Q1029.6 34 1030.6 35 L1031.6 36 Q1032.6 37 1031.6 38 L1024.4 45.2 Z M1027 48 H1034" stroke="#444" stroke-width="1.15" fill="none" />
<path d="M1087.3 41.3 L1090 44 L1092.7 41.3" stroke="#444" stroke-width="1.15" fill="none" />
<circle cx="1124.80" cy="42.60" r="8.30" stroke="#444" stroke-width="1.1" fill="none"/>
<circle cx="1124.60" cy="40.40" r="2.60" stroke="#444" stroke-width="1.1" fill="none"/>
<path d="M1119.3 48.6 Q1120 44.6 1124.6 44.6 Q1127 44.6 1128.4 46" stroke="#444" stroke-width="1.1" fill="none" />
<circle cx="1134.30" cy="42.40" r="9.50" stroke="#444" stroke-width="1.15" fill="#f3f3f3"/>
<path d="M1172.6 38.5 V37 Q1172.6 35.6 1171.2 35.6 H1162.6 Q1161.2 35.6 1161.2 37 V46 Q1161.2 47.4 1162.6 47.4 H1165.5 M1161.2 39.6 H1166.5 L1168 38.4 H1174 Q1175.4 38.4 1175.4 39.8 V42.5" stroke="#444" stroke-width="1.15" fill="none" />
<path d="M1168 47.5 H1176 M1173.2 44.6 L1176.2 47.5 L1173.2 50.4" stroke="#446fd4" stroke-width="1.15" fill="none" />
<circle cx="1202.60" cy="41.20" r="5.50" stroke="#444" stroke-width="1.2" fill="none"/>
<path d="M1206.6 45.2 L1211 49.4" stroke="#444" stroke-width="1.2" fill="none" />
<clipPath id="av"><circle cx="1220" cy="14" r="9.6"/></clipPath><g clip-path="url(#av)"><rect x="1210" y="4" width="20" height="20" fill="#d9d9d9"/><ellipse cx="1220" cy="26" rx="8" ry="5" fill="#f6f6f6"/><rect x="1218" y="16" width="4.4" height="6" fill="#9a6b55"/><ellipse cx="1220.2" cy="13.2" rx="3.3" ry="4.6" fill="#b98870"/><path d="M1216.6 12 Q1216.4 7.2 1220.4 7.3 Q1224.2 7.4 1223.9 12 Q1223 9.6 1220.3 9.7 Q1217.6 9.6 1216.6 12Z" fill="#3a2a22"/><path d="M1218 17 Q1220.2 19.2 1222.4 17 L1222.2 18.6 Q1220.2 20 1218.2 18.6Z" fill="#6a463a"/></g>
<path d="M29.4 81.7 H27 Q25.6 81.7 25.6 80.3 V75.2 Q25.6 73.8 27 73.8 H32.4 Q33.8 73.8 33.8 75.2 V77.4" stroke="#b4b4b4" stroke-width="1.1" fill="none" />
<rect x="30.20" y="78.20" width="8.10" height="8.10" rx="1.6" stroke="#b4b4b4" stroke-width="1.1" fill="none"/>
<circle cx="61.60" cy="75.90" r="2.10" stroke="#b4b4b4" stroke-width="1.1" fill="none"/>
<circle cx="63.10" cy="84.40" r="2.10" stroke="#b4b4b4" stroke-width="1.1" fill="none"/>
<path d="M62.3 77.8 L63.6 80.4 M64 82.4 L72.6 73.4 M66.8 79.4 H73.6" stroke="#b4b4b4" stroke-width="1.1" fill="none" />
<rect x="26.60" y="110.30" width="10.80" height="11.90" rx="1.8" stroke="#333" stroke-width="1.25" fill="none"/>
<rect x="29.30" y="108.90" width="5.40" height="2.50" rx="1.2" stroke="#333" stroke-width="1.1" fill="#fff"/>
<path d="M29.3 115 H34.7 M29.3 118.3 H32.8" stroke="#333" stroke-width="1.2" fill="none" />
<path d="M61.7 109 H70.2 V116.2 Q70.2 117.4 69 117.4 H67.4 V121.6 Q67.4 123 66 123 Q64.6 123 64.6 121.6 V117.4 H62.9 Q61.7 117.4 61.7 116.2 Z M61.7 114.3 H70.2 M65.2 109 V111.2 M67.6 109 V112" stroke="#333" stroke-width="1.25" fill="none" />
<path d="M128.4 120.3 L131 122.9 L133.6 120.3" stroke="#444" stroke-width="1.1" fill="none" />
<path d="M897.2 120.3 L899.8 122.9 L902.4 120.3" stroke="#444" stroke-width="1.1" fill="none" />
<rect x="108.60" y="77.60" width="18.70" height="13.70" rx="2" stroke="#446fd4" stroke-width="1.25" fill="none"/>
<path d="M112 80.6 H115.6 M112 88.5 H115.6 M113.8 80.6 V88.5" stroke="#333" stroke-width="1.1" fill="none" />
<rect x="155.60" y="76.60" width="19.00" height="6.70" rx="1.6" stroke="#446fd4" stroke-width="1.15" fill="none"/>
<path d="M169.6 76.6 V83.3 M170.8 79.3 L172.1 80.6 L173.4 79.3" stroke="#446fd4" stroke-width="1" fill="none" />
<path d="M156.7 83.4 V90.8 Q156.7 92 157.9 92 H166.3 Q167.5 92 167.5 90.8 V83.4 M158.8 86 H165.2 M158.8 88.7 H165.2" stroke="#333" stroke-width="1.15" fill="none" />
<rect x="214.60" y="76.60" width="19.00" height="6.70" rx="1.6" stroke="#446fd4" stroke-width="1.15" fill="none"/>
<path d="M229 79.2 L230.4 80.6 L231.8 79.2" stroke="#446fd4" stroke-width="1" fill="none" />
<path d="M216.3 83.4 V90.8 Q216.3 92 217.5 92 H230.7 Q231.9 92 231.9 90.8 V83.4 M218.8 86 H229.4 M218.8 88.7 H229.4" stroke="#333" stroke-width="1.15" fill="none" />
<rect x="280.50" y="75.50" width="7.10" height="7.10" rx="1.3" stroke="#333" stroke-width="1.1" fill="none"/>
<path d="M282.3 79 L283.8 80.6 L286 77.4" stroke="#446fd4" stroke-width="1.1" fill="none" />
<rect x="280.50" y="85.50" width="7.10" height="7.10" rx="1.3" stroke="#333" stroke-width="1.1" fill="none"/>
<path d="M290.3 79.4 H296 M290.3 89.4 H296" stroke="#333" stroke-width="1.15" fill="none" />
<circle cx="338.90" cy="79.10" r="3.70" stroke="#333" stroke-width="1.1" fill="none"/>
<circle cx="338.90" cy="79.10" r="2.00" stroke="none" stroke-width="0" fill="#446fd4"/>
<circle cx="338.90" cy="89.20" r="3.70" stroke="#333" stroke-width="1.1" fill="none"/>
<path d="M345.2 79.4 H351 M345.2 89.4 H351" stroke="#333" stroke-width="1.15" fill="none" />
<rect x="379.60" y="75.60" width="16.90" height="16.80" rx="1.6" stroke="#333" stroke-width="1.15" fill="none"/>
<path d="M380 91.4 L388.5 84.3 L396.3 90.6" stroke="#333" stroke-width="1.15" fill="none" />
<circle cx="391.40" cy="80.40" r="1.50" stroke="#333" stroke-width="1" fill="none"/>
<path d="M434 76.6 H431.6 V91.4 H434 M448.6 76.6 H451 V91.4 H448.6" stroke="#333" stroke-width="1.15" fill="none" />
<path d="M435.6 83.8 Q436 81.4 438.4 80.6 Q439.2 83 438.6 86.6 Q438 89.6 436.4 89.4 Q435.4 88.6 437.8 86.6 Q440.6 84.4 441.6 82.2 Q441.4 84.6 441.8 86.2 Q443.4 84.4 444.4 82.6 Q444.4 85 446 85.4 L447.6 84.6" stroke="#446fd4" stroke-width="1" fill="none" />
<rect x="502.60" y="76.90" width="19.00" height="14.30" rx="1.6" stroke="#333" stroke-width="1.15" fill="none"/>
<path d="M503 77.6 L512.1 85.6 L521.2 77.6" stroke="#333" stroke-width="1.15" fill="none" />
<path d="M560.2 77.2 Q561.4 76.4 562.4 77.4 L564.2 79.8 Q564.8 80.8 564 81.8 L563 82.9 Q564.8 86.4 568.4 88.2 L569.6 87.2 Q570.6 86.4 571.6 87.1 L574 88.9 Q574.9 89.8 574.1 91 Q572.2 92.8 569.6 91.9 Q561.4 88.9 558.5 80.8 Q557.8 78.6 560.2 77.2Z" stroke="#333" stroke-width="1.1" fill="none" />
<path d="M567.4 80.6 Q569.6 81 570 83.2 M568 77.6 Q572.4 78.4 573 82.6" stroke="#333" stroke-width="1.05" fill="none" />
<path d="M617 91.3 H610.8 Q609.7 91.3 609.7 90.2 V77.6 Q609.7 76.5 610.8 76.5 H623.4 Q624.5 76.5 624.5 77.6 V84 M609.7 80.2 H624.5 M612.7 74 V76.5 M621.5 74 V76.5" stroke="#333" stroke-width="1.15" fill="none" />
<circle cx="622.40" cy="89.40" r="3.90" stroke="#446fd4" stroke-width="1.15" fill="none"/>
<path d="M622.4 87.2 V89.6 L623.9 90.6" stroke="#446fd4" stroke-width="1" fill="none" />
<path d="M652.7 91.6 Q651.6 91.6 651.6 90.5 V80.3 L661 74.6 L670.4 80.3 V90.5 Q670.4 91.6 669.3 91.6 Z" stroke="#333" stroke-width="1.15" fill="none" />
<rect x="692.30" y="77.30" width="19.50" height="13.30" rx="1.6" stroke="#333" stroke-width="1.15" fill="none"/>
<path d="M692.3 81.2 H711.8" stroke="#333" stroke-width="1.15" fill="none" />
<rect x="694.80" y="84.20" width="4.80" height="3.20" rx="1.2" stroke="#333" stroke-width="1.05" fill="none"/>
<rect x="742.50" y="77.40" width="19.20" height="13.30" rx="1.2" stroke="#333" stroke-width="1.15" fill="none"/>
<rect x="745.30" y="79.80" width="9.00" height="8.50" rx="0.8" stroke="#333" stroke-width="1.05" fill="none"/>
<path d="M747.3 84 L749.1 85.9 L752.3 81.9 M756.4 80.4 H759.6 M756.4 87.8 H759.6 M758 80.4 V87.8" stroke="#446fd4" stroke-width="1.05" fill="none" />
<circle cx="818.40" cy="80.30" r="3.40" stroke="#333" stroke-width="1.15" fill="none"/>
<path d="M812.6 91.3 V89.6 Q812.6 86 816.2 86 H820.6 Q824.2 86 824.2 89.6 V91.3 Z" stroke="#333" stroke-width="1.15" fill="none" stroke-linejoin="round"/>
<path d="M822.4 76.8 Q825.8 76 826.8 79.2 Q827 82.4 824 83.2 M826 86 Q828.8 86.6 828.8 89.6 V91.3 H826.4" stroke="#333" stroke-width="1.15" fill="none" />
<path d="M875.6 84 Q880 77.4 885 77.4 Q890 77.4 894.4 84 Q890 90.6 885 90.6 Q880 90.6 875.6 84Z" stroke="#333" stroke-width="1.15" fill="none" />
<circle cx="885.00" cy="84.00" r="2.70" stroke="#333" stroke-width="1.15" fill="none"/>
<circle cx="19.40" cy="175.60" r="6.10" stroke="#444" stroke-width="1.2" fill="none"/>
<path d="M23.8 180 L27.4 183.4" stroke="#444" stroke-width="1.2" fill="none" />
<path d="M13.9 203.6 H26.3 Q27.7 203.6 27.7 205 V212.2 Q27.7 213.6 26.3 213.6 H18.4 L15.4 216.8 V213.6 H13.9 Q12.5 213.6 12.5 212.2 V205 Q12.5 203.6 13.9 203.6 Z M15.6 207.2 H24.6 M15.6 210.2 H21.6" stroke="#444" stroke-width="1.15" fill="none" />
<path d="M13.2 250.6 L14.6 247.6 A7.7 7.7 0 1 1 17 250 Z" stroke="#444" stroke-width="1.15" fill="none" />
<circle cx="16.30" cy="243.70" r="1.15" stroke="#444" stroke-width="0.9" fill="none"/>
<circle cx="19.80" cy="243.70" r="1.15" stroke="#444" stroke-width="0.9" fill="none"/>
<circle cx="23.30" cy="243.70" r="1.15" stroke="#444" stroke-width="0.9" fill="none"/>
<path d="M13.3 271.7 H23 M16.2 276 H27 M16.2 280.2 H25 M13.3 284.3 H23" stroke="#444" stroke-width="1.2" fill="none" />
<path d="M12.6 311.2 V315 L22.4 317.6 V308.4 Z M22.4 307.2 H25.2 Q26.2 307.2 26.2 308.2 V317.4 Q26.2 318.4 25.2 318.4 H22.4 M15.4 315.8 L16.2 318.6 Q16.6 319.6 17.8 319.4 Q19 319 18.8 317.8 L18.6 316.8" stroke="#444" stroke-width="1.15" fill="none" />
<circle cx="19.80" cy="345.90" r="7.80" stroke="#444" stroke-width="1.15" fill="none"/>
<path d="M19.8 344.6 V350" stroke="#444" stroke-width="1.3" fill="none" />
<circle cx="19.80" cy="342.00" r="0.80" stroke="none" stroke-width="0" fill="#444"/>
<path d="M1222.4 182.6 V170.6 M1225.4 182.6 V170.6 M1226.8 170.6 H1219.4 Q1215.4 170.6 1215.4 174 Q1215.4 177.4 1219.4 177.4 H1222.4" stroke="#333" stroke-width="1.2" fill="none" />
<rect x="1206" y="197" width="28" height="24" rx="4" fill="#e2e2e2"/>
<rect x="1212.60" y="203.60" width="14.80" height="12.60" rx="1.2" stroke="#222" stroke-width="1.25" fill="none"/>
<path d="M1212.6 207.8 H1227.4 M1212.6 212 H1227.4 M1217.5 203.6 V216.2 M1222.5 203.6 V216.2" stroke="#222" stroke-width="1.2" fill="none" />
<rect x="1213.60" y="237.60" width="13.00" height="13.00" rx="1.4" stroke="#9a9a9a" stroke-width="1.1" fill="none"/>
<path d="M1214 249.6 L1220 244.4 L1226.3 249.2" stroke="#9a9a9a" stroke-width="1.1" fill="none" />
<circle cx="1223.00" cy="241.20" r="1.20" stroke="#9a9a9a" stroke-width="0.9" fill="none"/>
<rect x="1214.90" y="270.60" width="10.70" height="15.00" rx="1.6" stroke="#9a9a9a" stroke-width="1.1" fill="none"/>
<rect x="1217.30" y="273.00" width="5.90" height="2.20" rx="0.8" stroke="#9a9a9a" stroke-width="1" fill="none"/>
<rect x="1217.30" y="281.00" width="5.90" height="2.20" rx="0.8" stroke="#9a9a9a" stroke-width="1" fill="none"/>
<circle cx="1218.20" cy="310.80" r="5.50" stroke="#9a9a9a" stroke-width="1.1" fill="none"/>
<rect x="1218.00" y="311.20" width="8.60" height="8.60" rx="1.4" stroke="#9a9a9a" stroke-width="1.1" fill="#f3f3f3"/>
<rect x="1213.60" y="348.60" width="2.80" height="3.80" rx="0.6" stroke="#9a9a9a" stroke-width="1" fill="none"/>
<rect x="1218.40" y="345.20" width="2.80" height="7.20" rx="0.6" stroke="#9a9a9a" stroke-width="1" fill="none"/>
<rect x="1223.20" y="339.60" width="2.80" height="12.80" rx="0.6" stroke="#9a9a9a" stroke-width="1" fill="none"/>
<path d="M1215 383.4 L1220 373.6 L1225 383.4 M1216.8 380 H1223.2 M1214.4 387.4 Q1220 384.2 1225.6 387.4" stroke="#9a9a9a" stroke-width="1.1" fill="none" />
<path d="M1213.6 412.4 V419.2 Q1213.6 420.2 1214.6 420.2 H1226 Q1227 420.2 1227 419.2 V412.4 L1220.3 416.6 Z M1215.8 411.4 V408.8 Q1215.8 407.9 1216.7 407.9 H1224 Q1224.9 407.9 1224.9 408.8 V411.4 M1218 410.6 H1222.6 M1218 412.8 H1221" stroke="#9a9a9a" stroke-width="1.05" fill="none" />
<rect x="1212.60" y="442.40" width="15.00" height="10.80" rx="1.4" stroke="#a9bbe0" stroke-width="1.1" fill="none"/>
<path d="M1216 445.4 H1218.4 M1216 450.2 H1218.4 M1217.2 445.4 V450.2" stroke="#8a8a8a" stroke-width="0.9" fill="none" />
<rect x="959.50" y="149.50" width="12.00" height="12.00" rx="0" stroke="#cfcfcf" stroke-width="1" fill="#f7f7f7"/>
<path d="M962.6 157.2 L965.5 153.6 L968.4 157.2 Z" stroke="#a8a8a8" stroke-width="0.5" fill="#a8a8a8" />
<rect x="959.50" y="163.50" width="12.00" height="227.00" rx="0" stroke="#cfcfcf" stroke-width="1" fill="#f7f7f7"/>
<path d="M962.5 271.5 H968.5 M962.5 273.5 H968.5 M962.5 275.5 H968.5 M962.5 277.5 H968.5 M962.5 279.5 H968.5 M962.5 281.5 H968.5 M962.5 283.5 H968.5" stroke="#cfcfcf" stroke-width="1" fill="none" />
<rect x="959.50" y="662.50" width="12.00" height="12.00" rx="0" stroke="#cfcfcf" stroke-width="1" fill="#f7f7f7"/>
<path d="M962.6 666.8 L965.5 670.4 L968.4 666.8 Z" stroke="#a8a8a8" stroke-width="0.5" fill="#a8a8a8" />
<text x="1134.3" y="45.8" font-size="9.6" fill="#333" stroke="none" text-anchor="middle" font-family="'Liberation Sans',sans-serif">3</text>
<path d="M135.5 157 V166 M137.5 157 V166 M139.5 157 V166 M141.5 157 V166 M134.5 158.5 H142.5 M134.5 160.5 H142.5 M134.5 162.5 H142.5 M134.5 164.5 H142.5 " stroke="#4a4a4a" stroke-width="1" stroke-linecap="butt"/>
<path d="M382.5 157 V166 M384.5 157 V166 M386.5 157 V166 M388.5 157 V166 M381.5 158.5 H389.5 M381.5 160.5 H389.5 M381.5 162.5 H389.5 M381.5 164.5 H389.5 " stroke="#4a4a4a" stroke-width="1" stroke-linecap="butt"/>
<path d="M876.5 157 V166 M878.5 157 V166 M880.5 157 V166 M882.5 157 V166 M875.5 158.5 H883.5 M875.5 160.5 H883.5 M875.5 162.5 H883.5 M875.5 164.5 H883.5 " stroke="#4a4a4a" stroke-width="1" stroke-linecap="butt"/>
<path d="M148.6 151.6 H157.4 V152.6 L153.6 159.8 L157.4 166 V172 H148.6 V166 L152.4 159.8 L148.6 152.6 Z M148.6 166.6 H157.4" stroke="#444" stroke-width="1" fill="#fff" />
<path d="M373 166.8 V164.6 L377.6 161.6 L382.2 164.6 V166.8 Z" stroke="#444" stroke-width="1" fill="#fff" />
<clipPath id="pc"><rect x="412" y="259" width="158.5" height="211.5"/></clipPath>
<g clip-path="url(#pc)" stroke-linecap="round" stroke-linejoin="round">
<g transform="translate(432 262) scale(0.16949)" stroke="#3d3d3d" stroke-width="9.8" fill="none">
<path d="M160 335 C140 300 118 260 113 210 C108 165 135 120 190 122 C205 80 250 40 300 38 C325 36 345 48 355 55 C385 30 430 20 475 30 C510 38 535 60 535 92 C575 100 600 130 598 165 C596 200 570 225 555 250 C550 275 548 300 548 325 L482 440 L515 625 C490 600 455 578 425 570 L300 560 Z" fill="#3d3d3d" stroke="#3d3d3d" stroke-width="5"/>
<path d="M158 300 C125 285 102 325 122 368 C133 392 150 405 168 412 Z" fill="#e3f2fe"/>
<path d="M136 322 C146 332 152 348 156 364" stroke-width="6"/>
<path d="M160 335 C160 400 175 470 215 520 C240 555 290 578 330 572 C380 562 430 512 455 452 C470 412 476 372 470 345 C452 318 444 276 426 240 C396 214 356 212 335 192 C300 210 240 220 197 238 C178 254 165 300 160 335 Z" fill="#e3f2fe"/>
<path d="M160 335 C165 300 178 254 197 238 C240 220 300 210 335 192 C356 212 396 214 426 240 C444 276 452 318 470 345 L500 300 L420 150 L200 180 L140 260 Z" fill="#3d3d3d" stroke="none"/>
<path d="M484 348 C500 318 542 300 548 332 C553 372 520 428 474 442 Z" fill="#e3f2fe"/>
<path d="M496 372 C506 352 520 342 532 340" stroke-width="6"/>
<path d="M182 284 C204 262 240 256 266 263" stroke-width="21"/>
<path d="M332 250 C356 238 394 242 416 258" stroke-width="21"/>
<rect x="215" y="310" width="25" height="46" rx="11" fill="#3d3d3d" stroke="none"/>
<rect x="350" y="310" width="25" height="46" rx="11" fill="#3d3d3d" stroke="none"/>
<path d="M269 290 C262 330 254 372 258 400 C262 422 285 421 299 415"/>
<path d="M248 452 C282 482 352 472 391 426 M354 411 C372 416 386 426 393 436"/>
<path d="M286 552 L290 568" stroke-width="5"/>
</g>
<g transform="translate(408 352) scale(0.17230)" stroke="#3d3d3d" stroke-width="9.6" fill="none">
<path d="M376 32 C364 90 378 170 455 215 L495 280 L545 210 C592 190 642 150 642 92"/>
<path d="M370 100 L305 165 C310 230 320 290 335 338 L455 215 M305 165 C200 195 100 240 22 315"/>
<path d="M645 90 L725 145 C715 200 690 280 632 340 L545 210 M725 145 C800 170 880 195 945 220"/>
<path d="M50 290 C60 340 110 372 140 340 C166 300 150 250 170 222" stroke-width="7.4" stroke="#444"/>
<ellipse cx="243" cy="248" rx="34" ry="30" transform="rotate(-25 243 248)" stroke-width="7.4" stroke="#444"/>
<ellipse cx="400" cy="367" rx="62" ry="40" transform="rotate(-38 400 367)" stroke-width="7.4" stroke="#444"/>
<path d="M45 560 C40 590 70 640 110 648 C160 645 185 610 215 560 C250 510 275 450 240 420 C200 395 130 410 100 460 C80 500 50 530 45 560 Z" stroke-width="7.4" stroke="#444"/>
<path d="M255 635 C270 655 320 655 350 640 C385 620 385 580 355 568 C320 560 300 600 255 635 Z" stroke-width="7.4" stroke="#444"/>
<path d="M428 510 C425 545 460 572 500 560 C540 545 600 560 640 545 C682 525 682 480 640 455 C600 425 530 420 490 450 C460 470 430 485 428 510 Z" stroke-width="7.4" stroke="#444"/>
<path d="M705 355 C715 385 760 402 795 385 C832 365 846 320 820 300 C790 285 740 320 705 355 Z" stroke-width="7.4" stroke="#444"/>
<path d="M795 165 C785 200 800 235 840 240 C880 240 910 232 945 242" stroke-width="7.4" stroke="#444"/>
<path d="M945 358 C880 385 830 420 835 470 C840 512 890 522 945 500" stroke-width="7.4" stroke="#444"/>
<path d="M705 610 C700 640 720 662 760 656 C810 650 862 640 860 610 C855 580 810 555 760 558 C720 560 708 585 705 610 Z" stroke-width="7.4" stroke="#444"/>
</g>
</g>
<rect x="484.5" y="357.5" width="13" height="13" fill="#e6f3fe" stroke="#555" stroke-width="1"/>
<path d="M485.6 367.6 L488 365.2 L489.8 366.8 L493 363.4 L496.4 366.6" stroke="#666" stroke-width="0.8" stroke-linecap="butt"/>
<circle cx="487.6" cy="360.6" r="0.9" fill="#666"/>
<text x="616.4" y="421.6" font-size="15" fill="#3c3c3c" stroke="none" text-anchor="middle" font-family="'Liberation Sans',sans-serif">@</text>
<path d="M611.4 434.6 Q612.6 434.2 613.2 435.2 L614.6 438 Q615 439 614.2 439.8 L613 440.8 Q614.6 444.2 618 445.6 L619.2 444.6 Q620 444 621 444.4 L623.6 446 Q624.4 446.6 623.8 447.6 Q622.4 449.2 620 448.8 Q612.2 446.6 609.4 439.2 Q608.4 436 611.4 434.6Z" fill="#3c3c3c" stroke="#3c3c3c" stroke-width="0.6"/>
<clipPath id="gc"><rect x="602" y="455" width="26" height="19"/></clipPath><g clip-path="url(#gc)" stroke="#3c3c3c" stroke-width="1.1" fill="none"><circle cx="616.4" cy="466.4" r="7.1"/><ellipse cx="616.4" cy="466.4" rx="3.2" ry="7.1"/><path d="M609.6 463.8 H623.2 M609.6 469 H623.2 M616.4 459.3 V473.5"/></g>
<rect x="126" y="477" width="11.5" height="11.5" fill="#fff" stroke="#7a7a7a" stroke-width="1"/>
<path d="M128.2 482.75 H135.3 M131.75 479.2 V486.3 M129.6 481.4 L128.2 482.75 L129.6 484.1 M133.9 481.4 L135.3 482.75 L133.9 484.1 M130.4 480.6 L131.75 479.2 L133.1 480.6 M130.4 484.9 L131.75 486.3 L133.1 484.9" stroke="#444" stroke-width="0.9"/>
<path d="M991.20 181.50 l2.7 2.8 l5 -5.6" stroke="#fff" stroke-width="1.5"/>
<path d="M991.20 234.20 l2.7 2.8 l5 -5.6" stroke="#fff" stroke-width="1.5"/>
<path d="M1089.20 181.50 l2.7 2.8 l5 -5.6" stroke="#fff" stroke-width="1.5"/>
<path d="M993.70 275.70 V322.30 M1007.02 275.70 V322.30 M1020.34 275.70 V322.30 M1033.66 275.70 V322.30 M1046.98 275.70 V322.30 M1060.30 275.70 V322.30 M993.70 275.70 H1060.30 M993.70 285.02 H1060.30 M993.70 294.34 H1060.30 M993.70 303.66 H1060.30 M993.70 312.98 H1060.30 M993.70 322.30 H1060.30 " stroke="#111" stroke-width="1.2" stroke-linecap="square"/>
<path d="M996.90 280.56 h6.92 M996.90 289.88 h6.92 M996.90 299.20 h6.92 M996.90 308.52 h6.92 M996.90 317.84 h6.92 M1010.22 280.56 h6.92 M1010.22 289.88 h6.92 M1010.22 299.20 h6.92 M1010.22 308.52 h6.92 M1010.22 317.84 h6.92 M1023.54 280.56 h6.92 M1023.54 289.88 h6.92 M1023.54 299.20 h6.92 M1023.54 308.52 h6.92 M1023.54 317.84 h6.92 M1036.86 280.56 h6.92 M1036.86 289.88 h6.92 M1036.86 299.20 h6.92 M1036.86 308.52 h6.92 M1036.86 317.84 h6.92 M1050.18 280.56 h6.92 M1050.18 289.88 h6.92 M1050.18 299.20 h6.92 M1050.18 308.52 h6.92 M1050.18 317.84 h6.92 " stroke="#111" stroke-width="1.1" stroke-linecap="butt"/>
<path d="M1068.3 297.8 L1071 300.5 L1073.7 297.8" stroke="#444" stroke-width="1.1" fill="none" />
<path d="M1069.3 381.2 L1072 383.9 L1074.7 381.2" stroke="#444" stroke-width="1.1" fill="none" />
<path d="M1172.3 381.2 L1175 383.9 L1177.7 381.2" stroke="#444" stroke-width="1.1" fill="none" />
<path d="M993.10 452.60 V467.20" stroke="#446fd4" stroke-width="1.2"/>
<path d="M1007.70 452.60 V467.20" stroke="#446fd4" stroke-width="1.2"/>
<path d="M993.10 452.60 H1007.70" stroke="#446fd4" stroke-width="1.2"/>
<path d="M993.10 467.20 H1007.70" stroke="#446fd4" stroke-width="1.2"/>
<path d="M1000.40 453.80 V466.00" stroke="#446fd4" stroke-width="1.2"/>
<path d="M994.30 459.90 H1006.50" stroke="#446fd4" stroke-width="1.2"/>
<path d="M1021.10 452.60 V467.20" stroke="#8c8c8c" stroke-width="1" stroke-dasharray="2.2 2" stroke-linecap="butt"/>
<path d="M1035.70 452.60 V467.20" stroke="#8c8c8c" stroke-width="1" stroke-dasharray="2.2 2" stroke-linecap="butt"/>
<path d="M1021.10 452.60 H1035.70" stroke="#8c8c8c" stroke-width="1" stroke-dasharray="2.2 2" stroke-linecap="butt"/>
<path d="M1021.10 467.20 H1035.70" stroke="#8c8c8c" stroke-width="1" stroke-dasharray="2.2 2" stroke-linecap="butt"/>
<path d="M1028.40 453.80 V466.00" stroke="#8c8c8c" stroke-width="1" stroke-dasharray="2.2 2" stroke-linecap="butt"/>
<path d="M1022.30 459.90 H1034.50" stroke="#8c8c8c" stroke-width="1" stroke-dasharray="2.2 2" stroke-linecap="butt"/>
<path d="M1049.10 452.60 V467.20" stroke="#8c8c8c" stroke-width="1" stroke-dasharray="2.2 2" stroke-linecap="butt"/>
<path d="M1063.70 452.60 V467.20" stroke="#8c8c8c" stroke-width="1" stroke-dasharray="2.2 2" stroke-linecap="butt"/>
<path d="M1049.10 452.60 H1063.70" stroke="#8c8c8c" stroke-width="1" stroke-dasharray="2.2 2" stroke-linecap="butt"/>
<path d="M1049.10 467.20 H1063.70" stroke="#8c8c8c" stroke-width="1" stroke-dasharray="2.2 2" stroke-linecap="butt"/>
<path d="M1056.40 453.80 V466.00" stroke="#446fd4" stroke-width="1.2"/>
<path d="M1050.30 459.90 H1062.50" stroke="#446fd4" stroke-width="1.2"/>
<path d="M1077.10 452.60 V467.20" stroke="#446fd4" stroke-width="1.2"/>
<path d="M1091.70 452.60 V467.20" stroke="#446fd4" stroke-width="1.2"/>
<path d="M1077.10 452.60 H1091.70" stroke="#446fd4" stroke-width="1.2"/>
<path d="M1077.10 467.20 H1091.70" stroke="#446fd4" stroke-width="1.2"/>
<path d="M1084.40 453.80 V466.00" stroke="#8c8c8c" stroke-width="1" stroke-dasharray="2.2 2" stroke-linecap="butt"/>
<path d="M1078.30 459.90 H1090.50" stroke="#8c8c8c" stroke-width="1" stroke-dasharray="2.2 2" stroke-linecap="butt"/>
<path d="M993.10 485.10 V499.70" stroke="#446fd4" stroke-width="1.2"/>
<path d="M1007.70 485.10 V499.70" stroke="#8c8c8c" stroke-width="1" stroke-dasharray="2.2 2" stroke-linecap="butt"/>
<path d="M993.10 485.10 H1007.70" stroke="#8c8c8c" stroke-width="1" stroke-dasharray="2.2 2" stroke-linecap="butt"/>
<path d="M993.10 499.70 H1007.70" stroke="#8c8c8c" stroke-width="1" stroke-dasharray="2.2 2" stroke-linecap="butt"/>
<path d="M1000.40 486.30 V498.50" stroke="#8c8c8c" stroke-width="1" stroke-dasharray="2.2 2" stroke-linecap="butt"/>
<path d="M994.30 492.40 H1006.50" stroke="#8c8c8c" stroke-width="1" stroke-dasharray="2.2 2" stroke-linecap="butt"/>
<path d="M1021.10 485.10 V499.70" stroke="#8c8c8c" stroke-width="1" stroke-dasharray="2.2 2" stroke-linecap="butt"/>
<path d="M1035.70 485.10 V499.70" stroke="#8c8c8c" stroke-width="1" stroke-dasharray="2.2 2" stroke-linecap="butt"/>
<path d="M1021.10 485.10 H1035.70" stroke="#8c8c8c" stroke-width="1" stroke-dasharray="2.2 2" stroke-linecap="butt"/>
<path d="M1021.10 499.70 H1035.70" stroke="#8c8c8c" stroke-width="1" stroke-dasharray="2.2 2" stroke-linecap="butt"/>
<path d="M1028.40 486.30 V498.50" stroke="#446fd4" stroke-width="1.2"/>
<path d="M1022.30 492.40 H1034.50" stroke="#8c8c8c" stroke-width="1" stroke-dasharray="2.2 2" stroke-linecap="butt"/>
<path d="M1049.10 485.10 V499.70" stroke="#8c8c8c" stroke-width="1" stroke-dasharray="2.2 2" stroke-linecap="butt"/>
<path d="M1063.70 485.10 V499.70" stroke="#446fd4" stroke-width="1.2"/>
<path d="M1049.10 485.10 H1063.70" stroke="#8c8c8c" stroke-width="1" stroke-dasharray="2.2 2" stroke-linecap="butt"/>
<path d="M1049.10 499.70 H1063.70" stroke="#8c8c8c" stroke-width="1" stroke-dasharray="2.2 2" stroke-linecap="butt"/>
<path d="M1056.40 486.30 V498.50" stroke="#8c8c8c" stroke-width="1" stroke-dasharray="2.2 2" stroke-linecap="butt"/>
<path d="M1050.30 492.40 H1062.50" stroke="#8c8c8c" stroke-width="1" stroke-dasharray="2.2 2" stroke-linecap="butt"/>
<path d="M1077.10 485.10 V499.70" stroke="#8c8c8c" stroke-width="1" stroke-dasharray="2.2 2" stroke-linecap="butt"/>
<path d="M1091.70 485.10 V499.70" stroke="#8c8c8c" stroke-width="1" stroke-dasharray="2.2 2" stroke-linecap="butt"/>
<path d="M1077.10 485.10 H1091.70" stroke="#446fd4" stroke-width="1.2"/>
<path d="M1077.10 499.70 H1091.70" stroke="#8c8c8c" stroke-width="1" stroke-dasharray="2.2 2" stroke-linecap="butt"/>
<path d="M1084.40 486.30 V498.50" stroke="#8c8c8c" stroke-width="1" stroke-dasharray="2.2 2" stroke-linecap="butt"/>
<path d="M1078.30 492.40 H1090.50" stroke="#8c8c8c" stroke-width="1" stroke-dasharray="2.2 2" stroke-linecap="butt"/>
<path d="M1105.10 485.10 V499.70" stroke="#8c8c8c" stroke-width="1" stroke-dasharray="2.2 2" stroke-linecap="butt"/>
<path d="M1119.70 485.10 V499.70" stroke="#8c8c8c" stroke-width="1" stroke-dasharray="2.2 2" stroke-linecap="butt"/>
<path d="M1105.10 485.10 H1119.70" stroke="#8c8c8c" stroke-width="1" stroke-dasharray="2.2 2" stroke-linecap="butt"/>
<path d="M1105.10 499.70 H1119.70" stroke="#8c8c8c" stroke-width="1" stroke-dasharray="2.2 2" stroke-linecap="butt"/>
<path d="M1112.40 486.30 V498.50" stroke="#8c8c8c" stroke-width="1" stroke-dasharray="2.2 2" stroke-linecap="butt"/>
<path d="M1106.30 492.40 H1118.50" stroke="#446fd4" stroke-width="1.2"/>
<path d="M1133.10 485.10 V499.70" stroke="#8c8c8c" stroke-width="1" stroke-dasharray="2.2 2" stroke-linecap="butt"/>
<path d="M1147.70 485.10 V499.70" stroke="#8c8c8c" stroke-width="1" stroke-dasharray="2.2 2" stroke-linecap="butt"/>
<path d="M1133.10 485.10 H1147.70" stroke="#8c8c8c" stroke-width="1" stroke-dasharray="2.2 2" stroke-linecap="butt"/>
<path d="M1133.10 499.70 H1147.70" stroke="#446fd4" stroke-width="1.2"/>
<path d="M1140.40 486.30 V498.50" stroke="#8c8c8c" stroke-width="1" stroke-dasharray="2.2 2" stroke-linecap="butt"/>
<path d="M1134.30 492.40 H1146.50" stroke="#8c8c8c" stroke-width="1" stroke-dasharray="2.2 2" stroke-linecap="butt"/>
<path d="M1126.3 524.6 L1129 527.3 L1131.7 524.6" stroke="#444" stroke-width="1.1" fill="none" />
<rect x="992.60" y="561.60" width="14.80" height="11.40" rx="1.2" stroke="#333" stroke-width="1.15" fill="none"/>
<path d="M992.6 565.4 H1007.4 M992.6 569.2 H1007.4 M997.5 561.6 V573 M1002.5 561.6 V573" stroke="#333" stroke-width="1.1" fill="none" />
<path d="M1113.8 566 L1116.4 568.6 L1119 566" stroke="#444" stroke-width="1.1" fill="none" />
<path d="M1144.3 622.6 L1147 619.9 L1149.7 622.6 M1144.3 630 L1147 632.7 L1149.7 630" stroke="#444" stroke-width="1.1" fill="none" />
<path d="M1144.3 654 L1147 651.3 L1149.7 654 M1144.3 661.6 L1147 664.3 L1149.7 661.6" stroke="#444" stroke-width="1.1" fill="none" />
<rect x="1165.60" y="619.60" width="6.00" height="13.80" rx="1" stroke="#333" stroke-width="1.15" fill="none"/>
<path d="M1165.6 626.5 H1171.6" stroke="#333" stroke-width="1.1" fill="none" />
<path d="M1176.6 619.6 V633.4 M1174.6 619.8 H1178.6 M1174.6 633.2 H1178.6 M1174.6 626.5 H1178.6" stroke="#446fd4" stroke-width="1.1" fill="none" />
<rect x="1164.60" y="657.60" width="13.80" height="6.00" rx="1" stroke="#333" stroke-width="1.15" fill="none"/>
<path d="M1171.5 657.6 V663.6" stroke="#333" stroke-width="1.1" fill="none" />
<path d="M1164.6 652.4 H1178.4 M1164.8 650.4 V654.4 M1178.2 650.4 V654.4 M1171.5 650.4 V654.4" stroke="#446fd4" stroke-width="1.1" fill="none" />
<text x="1107" y="631" font-size="12.5" fill="#333" stroke="none" font-family="'Liberation Sans',sans-serif" textLength="30" lengthAdjust="spacingAndGlyphs">0.32 "</text>
<path d="M83.4 686 H95.4 M83.4 690.3 H95.4" stroke="#333" stroke-width="1.15" fill="none" />
<text x="82.8" y="698.3" font-size="6.6" font-weight="700" fill="#446fd4" stroke="none" font-family="'Liberation Sans',sans-serif">12</text>
<path d="M92.6 696.8 H95" stroke="#446fd4" stroke-width="1.1" fill="none" />
<path d="M909.3 692 L912 694.7 L914.7 692" stroke="#444" stroke-width="1.1" fill="none" />
<circle cx="932.20" cy="692.30" r="7.70" stroke="#333" stroke-width="1.15" fill="none"/>
<ellipse cx="932.2" cy="692.3" rx="3.3" ry="7.7" stroke="#333" stroke-width="1.05"/>
<path d="M925 689.6 H939.4 M925 695 H939.4 M932.2 684.6 V700" stroke="#333" stroke-width="1.05" fill="none" />
<path d="M963 697.6 H955.6 Q954.4 697.6 954.4 696.4 V687 Q954.4 685.8 955.6 685.8 H965 Q966.2 685.8 966.2 687 V692.6" stroke="#333" stroke-width="1.2" fill="none" />
<path d="M957.3 695 L960.3 687.8 L963.3 695 M958.3 692.6 H962.3" stroke="#333" stroke-width="1.1" fill="none" />
<path d="M963.6 697.2 L965.4 699 L968.6 695.2" stroke="#446fd4" stroke-width="1.15" fill="none" />
<path d="M988.8 687.4 H996 M988.8 691.4 H993" stroke="#446fd4" stroke-width="1.15" fill="none" />
<path d="M993 697.6 L993.8 694.6 L1001.2 687.2 Q1002.2 686.4 1003.2 687.2 L1004 688 Q1004.8 689 1004 690 L996.6 697.2 Z M999.6 688.8 L1002.4 691.6" stroke="#333" stroke-width="1.1" fill="none" />
<path d="M1014.3 691.4 L1017 694.1 L1019.7 691.4" stroke="#444" stroke-width="1.1" fill="none" />
<rect x="1044.60" y="684.80" width="11.00" height="14.40" rx="2" stroke="#333" stroke-width="1.15" fill="none"/>
<path d="M1047 689.6 V687.4 H1049 M1051.2 687.4 H1053.2 V689.6 M1047 694.4 V696.6 H1049 M1051.2 696.6 H1053.2 V694.4" stroke="#446fd4" stroke-width="1" fill="none" />
<path d="M1076.2 694 V685.8 Q1076.2 684.6 1077.4 684.6 H1087 Q1088.2 684.6 1088.2 685.8 V694" stroke="#333" stroke-width="1.15" fill="none" />
<path d="M1076 697.4 H1088.6 M1078.2 695.2 L1076 697.4 L1078.2 699.6 M1086.4 695.2 L1088.6 697.4 L1086.4 699.6" stroke="#446fd4" stroke-width="1.05" fill="none" />
<path d="M1107 691.5 H1120" stroke="#333" stroke-width="1.2" fill="none" />
<path d="M1211 691.5 H1224 M1217.5 685 V698" stroke="#333" stroke-width="1.2" fill="none" /></svg>
</body></html>
